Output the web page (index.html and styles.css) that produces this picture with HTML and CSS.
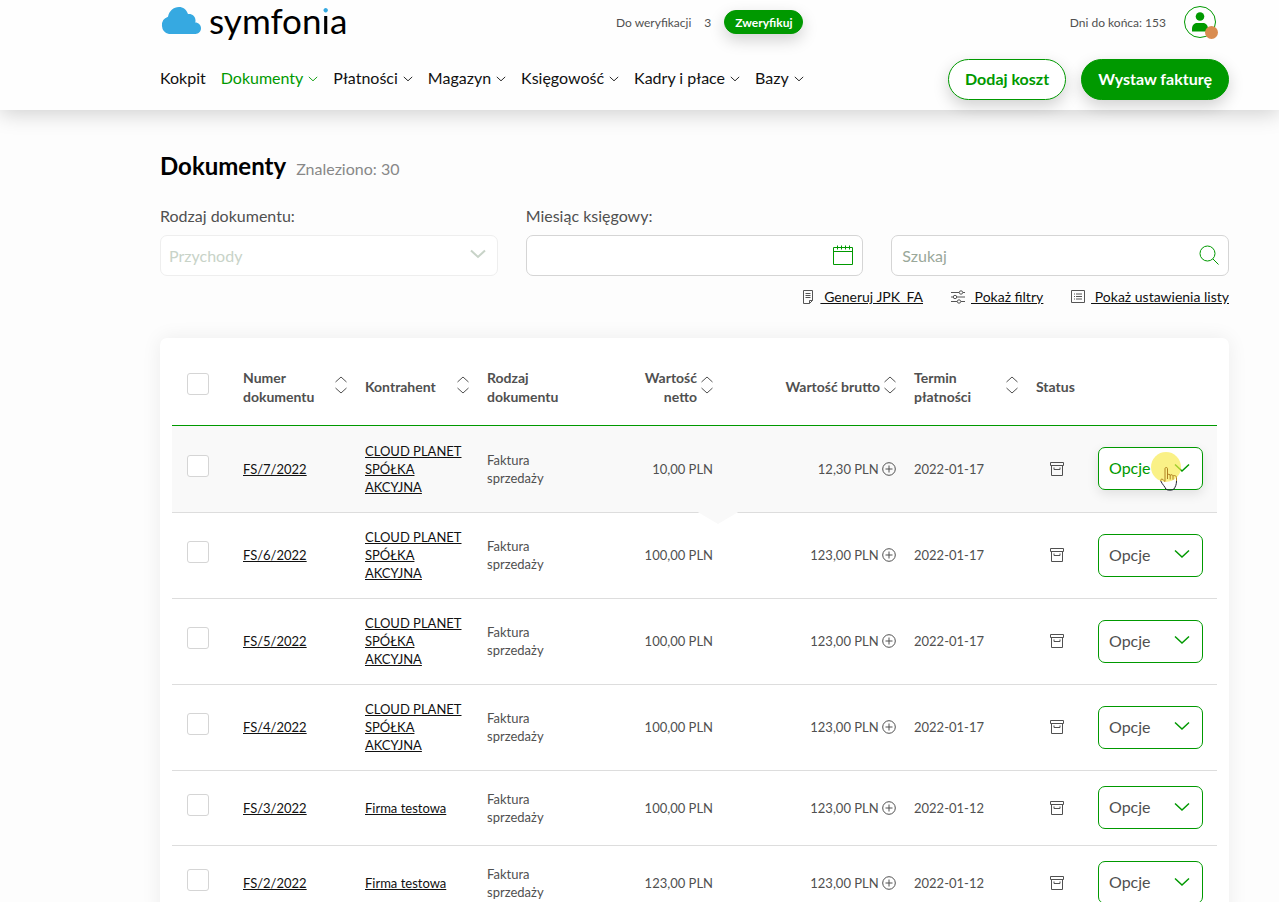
FILE: index.html
```
<!DOCTYPE html>
<html lang="pl">
<head>
  <meta charset="UTF-8" />
  <meta name="viewport" content="width=device-width, initial-scale=1" />
  <title>Dokumenty | Symfonia</title>
  <link rel="stylesheet" href="styles.css">
</head>
<body>

  <!-- Shared icons -->
  <svg class="sprite" aria-hidden="true">
    <symbol id="chevron" viewBox="0 0 16 10"><path d="M1 1.500 8 8l7-6.500" /></symbol>
    <symbol id="sort" viewBox="0 0 12 18"><path d="M.5 6 6 1l5.500 5M.5 12 6 17l5.500-5" /></symbol>
    <symbol id="plus" viewBox="0 0 14 14"><circle cx="7" cy="7" r="6.300" /><path d="M7 3.500v7M3.500 7h7" /></symbol>
    <symbol id="archive" viewBox="0 0 14 14"><path d="M.5.5h13v3H.5zM1.500 3.500v10h11v-10M4 5.500v2h6v-2" /></symbol>
  </svg>

  <header>
    <div class="top-bar">
      <a class="logo" href="#">
        <svg class="cloud" viewBox="0 0 41 27"><path d="M9 27a9 9 0 0 1-1-17.300C9 4 13.500 0 19 0c4 0 7.500 2.500 9 7 4-.5 7.500 2 7.500 6.500 0 .8 0 1.300-.3 2C38.500 15.500 41 18 41 21.300 41 24.500 38.500 27 35.500 27Z" /></svg>
        <span class="wordmark">symfon<span class="dot">i</span>a</span>
      </a>
      <div class="verify">
        <span>Do weryfikacji</span>
        <span>3</span>
        <button type="button" class="btn btn-small">Zweryfikuj</button>
      </div>
      <div class="account">
        <span>Dni do końca: 153</span>
        <a class="avatar" href="#" aria-label="Konto">
          <svg viewBox="0 0 16 20"><circle cx="8" cy="4.500" r="4.300" /><path d="M0 19.500V17c0-3.500 2-6 5-6h6c3 0 5 2.500 5 6v2.500Z" /></svg>
        </a>
      </div>
    </div>
    <div class="nav-bar">
      <nav>
        <a href="#">Kokpit</a>
        <a href="#" class="active">Dokumenty <svg class="caret"><use href="#chevron" /></svg></a>
        <a href="#">Płatności <svg class="caret"><use href="#chevron" /></svg></a>
        <a href="#">Magazyn <svg class="caret"><use href="#chevron" /></svg></a>
        <a href="#">Księgowość <svg class="caret"><use href="#chevron" /></svg></a>
        <a href="#">Kadry i płace <svg class="caret"><use href="#chevron" /></svg></a>
        <a href="#">Bazy <svg class="caret"><use href="#chevron" /></svg></a>
      </nav>
      <div class="actions">
        <button type="button" class="btn btn-outline">Dodaj koszt</button>
        <button type="button" class="btn">Wystaw fakturę</button>
      </div>
    </div>
  </header>

  <main>
    <div class="page-title">
      <h1>Dokumenty</h1>
      <span>Znaleziono: 30</span>
    </div>

    <div class="filter-section">
      <div class="field">
        <label for="docType">Rodzaj dokumentu:</label>
        <div class="control">
          <select id="docType" disabled>
            <option>Przychody</option>
          </select>
          <svg class="select-icon"><use href="#chevron" /></svg>
        </div>
      </div>
      <div class="field">
        <label for="month">Miesiąc księgowy:</label>
        <div class="control">
          <input type="text" id="month" />
          <svg class="field-icon" viewBox="0 0 20 20"><path d="M.5 2.500h19v17H.5zM.5 6.500h19M4.500.5v4M8.500.5v4M12.500.5v4M16.500.5v4" /></svg>
        </div>
      </div>
      <div class="field">
        <div class="control">
          <input type="text" id="search" placeholder="Szukaj" aria-label="Szukaj" />
          <svg class="field-icon" viewBox="0 0 20 20"><circle cx="8.500" cy="8.500" r="7.500" /><path d="m14 14 5.500 5.500" /></svg>
        </div>
      </div>
    </div>

    <div class="list-links">
      <a href="#"><svg viewBox="0 0 14 14"><path d="M2.500.5h9v10l-3 3h-6zM11.500 10.500h-3v3M4.500 3.500h5M4.500 5.500h5M4.500 7.500h5" /></svg><span>&nbsp;Generuj JPK_FA</span></a>
      <a href="#"><svg viewBox="0 0 14 14"><path d="M0 2.500h8M12 2.500h2M0 7h2M6 7h8M0 11.500h6M10 11.500h4" /><circle cx="10" cy="2.500" r="1.700" /><circle cx="4" cy="7" r="1.700" /><circle cx="8" cy="11.500" r="1.700" /></svg><span>&nbsp;Pokaż filtry</span></a>
      <a href="#"><svg viewBox="0 0 14 14"><path d="M.5.5h13v12H.5zM5 4h6M5 6.500h6M5 9h6M3 4h1M3 6.500h1M3 9h1" /></svg><span>&nbsp;Pokaż ustawienia listy</span></a>
    </div>

    <div class="card">
      <table>
        <colgroup>
          <col class="col-1"><col class="col-2"><col class="col-2"><col class="col-2"><col class="col-2"><col class="col-3"><col class="col-2"><col class="col-1"><col>
        </colgroup>
        <thead>
          <tr>
            <th><input type="checkbox" aria-label="Zaznacz wszystkie" /></th>
            <th><div class="head"><span>Numer dokumentu</span><svg class="sort"><use href="#sort" /></svg></div></th>
            <th><div class="head"><span>Kontrahent</span><svg class="sort"><use href="#sort" /></svg></div></th>
            <th class="kind">Rodzaj dokumentu</th>
            <th class="num net"><div class="head"><span>Wartość netto</span><svg class="sort"><use href="#sort" /></svg></div></th>
            <th class="num"><div class="head"><span>Wartość brutto</span><svg class="sort"><use href="#sort" /></svg></div></th>
            <th><div class="head"><span>Termin płatności</span><svg class="sort"><use href="#sort" /></svg></div></th>
            <th>Status</th>
            <th></th>
          </tr>
        </thead>
        <tbody>
          <tr class="hovered">
            <td><input type="checkbox" aria-label="Zaznacz FS/7/2022" /></td>
            <td><a href="#">FS/7/2022</a></td>
            <td><a href="#">CLOUD PLANET SPÓŁKA AKCYJNA</a></td>
            <td class="kind">Faktura sprzedaży</td>
            <td class="num pointer">10,00 PLN</td>
            <td class="num">12,30 PLN <svg class="plus"><use href="#plus" /></svg></td>
            <td>2022-01-17</td>
            <td class="status"><svg><use href="#archive" /></svg></td>
            <td class="options">
              <button type="button">Opcje <svg><use href="#chevron" /></svg></button>
              <span class="click-mark"></span>
              <svg class="cursor" viewBox="0 0 18 24"><path class="finger" d="M.8 14c-.8-2 1.700-2.500 2.700-.8L5 14.500v-13c0-1.300 2.500-1.300 2.500 0V8c0-1 2.700-1 2.700.5 0-1.200 2.800-1 2.800.7 0-1 3.500-1 3.500 1.300v3.500M7.500 8v4M10.200 8.500v4M13 9.200v3.500" /><path d="M.8 14c1.500 3.500 4.200 5.500 5 8 1.500 1.600 6.700 1.600 8.200 0 1.500-2.500 2.500-4.500 2.500-8" /></svg>
            </td>
          </tr>
          <tr>
            <td><input type="checkbox" aria-label="Zaznacz FS/6/2022" /></td>
            <td><a href="#">FS/6/2022</a></td>
            <td><a href="#">CLOUD PLANET SPÓŁKA AKCYJNA</a></td>
            <td class="kind">Faktura sprzedaży</td>
            <td class="num">100,00 PLN</td>
            <td class="num">123,00 PLN <svg class="plus"><use href="#plus" /></svg></td>
            <td>2022-01-17</td>
            <td class="status"><svg><use href="#archive" /></svg></td>
            <td class="options"><button type="button">Opcje <svg><use href="#chevron" /></svg></button></td>
          </tr>
          <tr>
            <td><input type="checkbox" aria-label="Zaznacz FS/5/2022" /></td>
            <td><a href="#">FS/5/2022</a></td>
            <td><a href="#">CLOUD PLANET SPÓŁKA AKCYJNA</a></td>
            <td class="kind">Faktura sprzedaży</td>
            <td class="num">100,00 PLN</td>
            <td class="num">123,00 PLN <svg class="plus"><use href="#plus" /></svg></td>
            <td>2022-01-17</td>
            <td class="status"><svg><use href="#archive" /></svg></td>
            <td class="options"><button type="button">Opcje <svg><use href="#chevron" /></svg></button></td>
          </tr>
          <tr>
            <td><input type="checkbox" aria-label="Zaznacz FS/4/2022" /></td>
            <td><a href="#">FS/4/2022</a></td>
            <td><a href="#">CLOUD PLANET SPÓŁKA AKCYJNA</a></td>
            <td class="kind">Faktura sprzedaży</td>
            <td class="num">100,00 PLN</td>
            <td class="num">123,00 PLN <svg class="plus"><use href="#plus" /></svg></td>
            <td>2022-01-17</td>
            <td class="status"><svg><use href="#archive" /></svg></td>
            <td class="options"><button type="button">Opcje <svg><use href="#chevron" /></svg></button></td>
          </tr>
          <tr>
            <td><input type="checkbox" aria-label="Zaznacz FS/3/2022" /></td>
            <td><a href="#">FS/3/2022</a></td>
            <td><a href="#">Firma testowa</a></td>
            <td class="kind">Faktura sprzedaży</td>
            <td class="num">100,00 PLN</td>
            <td class="num">123,00 PLN <svg class="plus"><use href="#plus" /></svg></td>
            <td>2022-01-12</td>
            <td class="status"><svg><use href="#archive" /></svg></td>
            <td class="options"><button type="button">Opcje <svg><use href="#chevron" /></svg></button></td>
          </tr>
          <tr>
            <td><input type="checkbox" aria-label="Zaznacz FS/2/2022" /></td>
            <td><a href="#">FS/2/2022</a></td>
            <td><a href="#">Firma testowa</a></td>
            <td class="kind">Faktura sprzedaży</td>
            <td class="num">123,00 PLN</td>
            <td class="num">123,00 PLN <svg class="plus"><use href="#plus" /></svg></td>
            <td>2022-01-12</td>
            <td class="status"><svg><use href="#archive" /></svg></td>
            <td class="options"><button type="button">Opcje <svg><use href="#chevron" /></svg></button></td>
          </tr>
        </tbody>
      </table>
    </div>
  </main>

</body>
</html>
```
FILE: styles.css
```
/* Base Styles */
* {
  box-sizing: border-box;
}

body {
  margin: 0;
  font-family: Lato, sans-serif;
  font-size: 16px;
  background: #fdfdfd;
  color: #505050;
}

svg {
  fill: none;
  stroke: currentColor;
}

a {
  color: #111;
}

button,
input,
select {
  font-family: inherit;
}

.sprite {
  position: absolute;
  width: 0;
  height: 0;
}

/* Header */
header {
  padding: 0 50px 10px 160px;
  background: #fefefe;
  box-shadow: 0 4px 20px rgba(0, 0, 0, 0.18);
}

.top-bar {
  display: grid;
  grid-template-columns: 456px 1fr auto;
  align-items: center;
  height: 44px;
  font-size: 12px;
}

.logo {
  display: flex;
  align-items: center;
  gap: 8px;
  padding-bottom: 4px;
  text-decoration: none;
  color: #000;
}

.cloud {
  flex: none;
  width: 41px;
  height: 27px;
  fill: #36a9e1;
  stroke: none;
}

.wordmark {
  font-size: 35px;
  line-height: 40px;
}

/* the letter i has a blue tittle */
.dot {
  background: linear-gradient(#36a9e1 16px, #000 16px);
  background-clip: text;
  color: transparent;
}

.verify {
  display: flex;
  align-items: center;
  gap: 13px;
}

.account {
  display: flex;
  align-items: center;
  gap: 18px;
  padding-right: 13px;
}

.avatar {
  position: relative;
  display: flex;
  align-items: center;
  justify-content: center;
  width: 32px;
  height: 32px;
  border: 1px solid #090;
  border-radius: 50%;
}

.avatar svg {
  width: 16px;
  height: 20px;
  fill: #090;
  stroke: none;
}

.avatar::after {
  content: "";
  position: absolute;
  right: -3px;
  bottom: -2px;
  width: 13px;
  height: 13px;
  border-radius: 50%;
  background: #d98c50;
}

.nav-bar {
  display: flex;
  align-items: center;
  justify-content: space-between;
  margin-top: 15px;
}

nav {
  display: flex;
  gap: 15px;
  padding-bottom: 4px;
}

nav a {
  display: flex;
  align-items: center;
  gap: 5px;
  text-decoration: none;
  white-space: nowrap;
}

nav a.active {
  color: #090;
}

.caret {
  width: 10px;
  height: 6px;
  margin-top: 2px;
  stroke-width: 1.5;
}

.actions {
  display: flex;
  gap: 15px;
}

.btn {
  height: 41px;
  padding: 0 16px 2px;
  border: 1px solid #090;
  border-radius: 21px;
  background: #090;
  color: #fff;
  font-size: 16px;
  font-weight: 700;
  white-space: nowrap;
  box-shadow: 0 6px 16px rgba(0, 0, 0, 0.18);
}

.btn-outline {
  background: #fff;
  color: #090;
}

.btn-small {
  height: 24px;
  padding: 0 10px;
  font-size: 12px;
}

main {
  padding: 40px 50px 40px 160px;
}

.page-title {
  display: flex;
  align-items: baseline;
  gap: 10px;
  color: #888;
}

h1 {
  margin: 0;
  font-size: 24px;
  line-height: 32px;
  color: #000;
}

/* Filter Section */
.filter-section {
  display: grid;
  grid-template-columns: repeat(3, 1fr);
  align-items: end;
  gap: 28px;
  margin-top: 24px;
}

.field label {
  display: block;
  margin-bottom: 9px;
  line-height: 20px;
}

.control {
  position: relative;
}

.control input,
.control select {
  display: block;
  width: 100%;
  height: 41px;
  padding: 0 10px;
  border: 1px solid #d5d5d5;
  border-radius: 7px;
  background: #fff;
  font-size: 16px;
  appearance: none;
}

.control select {
  padding: 0 8px;
  border-color: #eee;
  color: #c8d3c8;
  opacity: 1;
}

.control input::placeholder {
  color: #9aa89a;
}

.field-icon {
  position: absolute;
  right: 10px;
  top: 10px;
  width: 20px;
  height: 20px;
  color: #090;
}

.select-icon {
  position: absolute;
  right: 12px;
  top: 14px;
  width: 16px;
  height: 10px;
  color: #c8d3c8;
  stroke-width: 2;
}

.list-links {
  display: flex;
  justify-content: flex-end;
  gap: 28px;
  margin-top: 11px;
  font-size: 14px;
  line-height: 20px;
}

.list-links a {
  display: flex;
  align-items: center;
  gap: 6px;
}

.list-links svg {
  width: 14px;
  height: 14px;
  color: #555;
}

.list-links span {
  text-decoration: underline;
}

/* Table Styles */
.card {
  margin-top: 31px;
  padding: 0 12px;
  border-radius: 7px;
  background: #fff;
  box-shadow: 0 0 20px rgba(0, 0, 0, 0.07);
}

table {
  width: 100%;
  table-layout: fixed;
  border-spacing: 0;
  font-size: 13px;
  line-height: 18px;
}

.col-1 {
  width: 62px;
}

.col-2 {
  width: 122px;
}

.col-3 {
  width: 183px;
}

th,
td {
  padding: 15px 9px 16px;
  text-align: left;
}

th {
  height: 88px;
  padding-top: 26px;
  border-bottom: 1px solid #090;
  font-size: 14px;
  line-height: 19px;
}

td {
  height: 75px;
  border-bottom: 1px solid #ddd;
}

.head {
  display: flex;
  align-items: center;
  justify-content: space-between;
}

.num {
  text-align: right;
}

.num .head {
  justify-content: flex-end;
  gap: 4px;
}

/* narrow columns, the text takes two lines */
.kind {
  padding-right: 30px;
}

.net .head {
  padding-left: 30px;
}

.sort {
  flex: none;
  width: 12px;
  height: 18px;
  margin-bottom: 4px;
}

.hovered td {
  height: 87px;
  background: #f9f9f9;
}

/* arrow under the hovered row */
.pointer {
  position: relative;
}

.pointer::after {
  content: "";
  position: absolute;
  right: -18px;
  top: 100%;
  z-index: 1;
  width: 44px;
  height: 13px;
  margin-top: -1px;
  background: #f9f9f9;
  clip-path: polygon(0 0, 100% 0, 50% 100%);
}

input[type="checkbox"] {
  display: block;
  width: 22px;
  height: 22px;
  margin: 0 0 6px 6px;
  border: 1px solid #d5d5d5;
  border-radius: 3px;
  background: #fff;
  appearance: none;
}

.plus {
  width: 14px;
  height: 14px;
  vertical-align: -2px;
}

.status svg {
  display: block;
  width: 14px;
  height: 14px;
  margin-left: 14px;
}

.options {
  position: relative;
}

.options button {
  display: flex;
  align-items: center;
  justify-content: space-between;
  width: 105px;
  height: 43px;
  padding: 0 12px 2px 10px;
  border: 1px solid #090;
  border-radius: 7px;
  background: #fff;
  color: #505050;
  font-size: 16px;
}

.options button svg {
  width: 16px;
  height: 10px;
  color: #090;
  stroke-width: 1.5;
}

.hovered .options button {
  color: #090;
  box-shadow: 0 4px 12px rgba(0, 0, 0, 0.1);
}

.click-mark {
  position: absolute;
  left: 62px;
  top: 26px;
  width: 30px;
  height: 30px;
  border-radius: 50%;
  background: rgba(247, 233, 70, 0.65);
}

.cursor {
  position: absolute;
  left: 71px;
  top: 41px;
  width: 18px;
  height: 24px;
  color: #223;
}

.cursor .finger {
  color: #b08020;
}

/* Responsive */
@media (max-width: 900px) {
  header,
  main {
    padding-left: 20px;
    padding-right: 20px;
  }
  .nav-bar,
  nav {
    flex-wrap: wrap;
  }
  .filter-section {
    grid-template-columns: 1fr;
  }
  .card {
    overflow-x: auto;
  }
}
```
